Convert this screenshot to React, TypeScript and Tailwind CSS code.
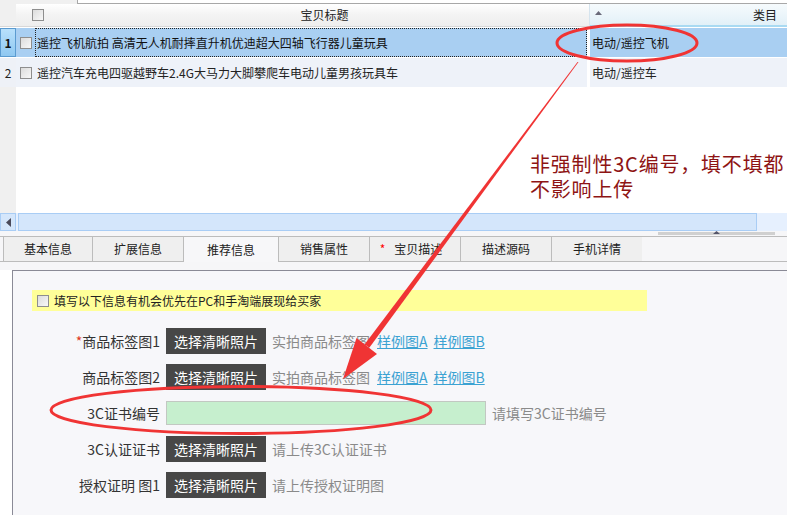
import React from "react";

function Check({ className = "" }: { className?: string }) {
  return (
    <span
      className={`inline-block w-[12px] h-[12px] border border-[#8e8e8e] bg-gradient-to-br from-[#dcdcdc] to-[#f8f8f8] ${className}`}
    />
  );
}

function Btn() {
  return (
    <div className="w-[100px] h-[26px] bg-[#474747] text-white text-[14px] flex items-center justify-center leading-none">
      选择清晰照片
    </div>
  );
}

export default function App() {
  const tabs = ["基本信息", "扩展信息", "推荐信息", "销售属性", "宝贝描述", "描述源码", "手机详情"];
  return (
    <div className="relative w-[787px] h-[515px] overflow-hidden bg-white font-['Noto_Sans_CJK_SC','Microsoft_YaHei',sans-serif] text-[#222]">
      {/* top strip */}
      <div className="flex h-[4px]">
        <div className="w-[77px] bg-[#f0f0f0]" />
        <div className="flex-1 bg-white border-l border-b border-[#a8a8a8]" />
      </div>
      {/* header */}
      <div className="flex h-[23px] text-[12px]">
        <div className="w-[16px] bg-[#f0f0f0] border-b border-[#d8d8d8]" />
        <div className="w-[573px] relative flex items-center border-b border-[#d8d8d8] bg-gradient-to-b from-[#ffffff] via-[#f3f3f3] to-[#eeeeee]">
          <Check className="ml-[16px]" />
          <div className="flex-1 text-center pl-[16px] leading-none">宝贝标题</div>
          <svg className="absolute left-[579px] top-[7px]" width="8" height="9" viewBox="0 0 8 9">
            <path d="M0 0 H8 V1.5 L5 3.5 V9 H3 V3.5 L0 1.5 Z" fill="#3b7fc4" />
          </svg>
        </div>
        <div className="w-px bg-[#d6e4ee]" />
        <div className="flex-1 relative flex items-center justify-end pr-[10px] bg-gradient-to-b from-[#f6fbfd] to-[#e2f0f8] border-b-2 border-[#a9daf2]">
          <svg className="absolute left-[5px] top-[7px]" width="7" height="4" viewBox="0 0 7 4">
            <path d="M0 4 L3.5 0 L7 4 Z" fill="#6a6a7a" />
          </svg>
          <span className="leading-none">类目</span>
        </div>
      </div>
      {/* row 1 */}
      <div className="flex h-[29px] mt-[1px] text-[12px]">
        <div className="w-[16px] bg-gradient-to-b from-[#b8e0fb] to-[#8fc8f1] border border-[#5b9bd0] flex items-center justify-center font-bold text-[12px] text-[#111]">
          1
        </div>
        <div className="w-[19px] bg-[#a9cff2] flex items-center justify-center">
          <Check />
        </div>
        <div className="w-[552px] bg-[#a9cff2] border border-dotted border-[#222] flex items-center pl-[1px] whitespace-nowrap overflow-hidden text-[#111]">
          遥控飞机航拍 高清无人机耐摔直升机优迪超大四轴飞行器儿童玩具
        </div>
        <div className="w-[3px] bg-white" />
        <div className="flex-1 bg-[#a9cff2] flex items-center pl-[2px] text-[#111]">电动/遥控飞机</div>
      </div>
      {/* row 2 */}
      <div className="flex h-[29px] mt-[1px] text-[12px]">
        <div className="w-[16px] bg-[#eef1f7] flex items-center justify-center text-[12px]">2</div>
        <div className="w-[19px] bg-[#eef2f9] flex items-center justify-center">
          <Check />
        </div>
        <div className="w-[552px] bg-[#eef2f9] flex items-center pl-[2px] whitespace-nowrap overflow-hidden">
          遥控汽车充电四驱越野车2.4G大马力大脚攀爬车电动儿童男孩玩具车
        </div>
        <div className="w-[3px] bg-white" />
        <div className="flex-1 bg-[#eef2f9] flex items-center pl-[2px]">电动/遥控车</div>
      </div>
      {/* empty area */}
      <div className="flex h-[126px]">
        <div className="w-[16px] bg-[#f0f0f0]" />
        <div className="flex-1 bg-white" />
      </div>
      {/* scrollbar */}
      <div className="flex h-[18px] bg-[#e6f0fe]">
        <div className="w-[16px] bg-[#d4e6fb] border border-[#a9cdf5] flex items-center justify-center">
          <svg width="5" height="9" viewBox="0 0 5 9">
            <path d="M5 0 L0 4.5 L5 9 Z" fill="#4a4a5a" />
          </svg>
        </div>
        <div className="w-[2px]" />
        <div className="w-[739px] bg-[#d4e6fb] border border-[#a9cdf5]" />
      </div>
      {/* splitter */}
      <div className="h-[5px] bg-[#f6f6f8] flex">
        <div className="ml-[658px] mt-[1px] w-[117px] h-[3px] bg-[#d0d0d0] flex justify-center">
          <svg width="7" height="3" viewBox="0 0 7 3" className="-mt-[1px]">
            <path d="M0 3 L3.5 0 L7 3 Z" fill="#55556a" />
          </svg>
        </div>
      </div>
      {/* tabs */}
      <div className="flex h-[26px] bg-[#f6f6f8] border-y border-[#bcbcbc] pl-[3px] text-[12px]">
        {tabs.map((t, i) => {
          const active = i === 2;
          const widths = ["w-[90px]", "w-[91px]", "w-[95px]", "w-[91px]", "w-[91px]", "w-[91px]", "w-[90px]"];
          return (
            <div
              key={t}
              className={`${widths[i]} flex items-center justify-center ${
                active ? "bg-[#f7f7f9] h-[25px] relative z-10" : "bg-[#efefef] h-[24px]"
              } ${i === 0 ? "border-l" : ""} ${i < 6 ? "border-r" : ""} border-[#bcbcbc] text-[#222]`}
            >
              {i === 4 ? (
                <>
                  <span className="text-[#ff0000] mr-[9px] -ml-[8px]">*</span>
                  {t}
                </>
              ) : (
                t
              )}
            </div>
          );
        })}
      </div>
      <div className="h-[8px] bg-[#f6f6f8]" />
      {/* content panel */}
      <div className="ml-[12px] h-[245px] border-t border-l border-[#8a8a96] bg-[#f7f7fa]">
        <div className="ml-[19px] mt-[19px] w-[615px] h-[21px] bg-[#ffff99] flex items-center pl-[5px] text-[12px] text-[#222]">
          <Check />
          <span className="ml-[5px] leading-none">填写以下信息有机会优先在PC和手淘端展现给买家</span>
        </div>
        <div className="mt-[17px] flex flex-col gap-[10px] text-[14px]">
          <div className="flex items-center h-[26px]">
            <div className="w-[147px] text-right text-[#333]">
              <span className="text-[#e03a1e]">*</span>商品标签图1
            </div>
            <div className="ml-[6px]">
              <Btn />
            </div>
            <span className="ml-[6px] text-[#8a8a8a]">实拍商品标签图</span>
            <span className="ml-[7px] text-[#3ba2d2] underline">样例图A</span>
            <span className="ml-[6px] text-[#3ba2d2] underline">样例图B</span>
          </div>
          <div className="flex items-center h-[26px]">
            <div className="w-[147px] text-right text-[#333]">商品标签图2</div>
            <div className="ml-[6px]">
              <Btn />
            </div>
            <span className="ml-[6px] text-[#8a8a8a]">实拍商品标签图</span>
            <span className="ml-[7px] text-[#3ba2d2] underline">样例图A</span>
            <span className="ml-[6px] text-[#3ba2d2] underline">样例图B</span>
          </div>
          <div className="flex items-center h-[26px]">
            <div className="w-[147px] text-right text-[#333]">3C证书编号</div>
            <div className="ml-[6px] w-[320px] h-[24px] bg-[#c6efce] border border-[#c2c8c2]" />
            <span className="ml-[6px] text-[#8a8a8a]">请填写3C证书编号</span>
          </div>
          <div className="flex items-center h-[26px]">
            <div className="w-[147px] text-right text-[#333]">3C认证证书</div>
            <div className="ml-[6px]">
              <Btn />
            </div>
            <span className="ml-[6px] text-[#8a8a8a]">请上传3C认证证书</span>
          </div>
          <div className="flex items-center h-[26px]">
            <div className="w-[147px] text-right text-[#333]">授权证明 图1</div>
            <div className="ml-[6px]">
              <Btn />
            </div>
            <span className="ml-[6px] text-[#8a8a8a]">请上传授权证明图</span>
          </div>
        </div>
      </div>

      {/* annotation overlay */}
      <svg className="absolute left-0 top-0 pointer-events-none" width="787" height="515" viewBox="0 0 787 515">
        <ellipse cx="627" cy="43" rx="70" ry="18" fill="none" stroke="#f03434" strokeWidth="3" />
        <ellipse cx="241" cy="410" rx="190" ry="23.5" fill="none" stroke="#f03434" strokeWidth="3" />
        <polygon points="577.5,62 578.5,62 369.5,347.5 364.5,344.5" fill="#f03434" />
        <polygon points="343,379 377,354 356.5,338" fill="#f03434" />
      </svg>
      <div className="absolute left-[530px] top-[151px] flex flex-col text-[20px] tracking-[0.8px] text-[#8e1414] whitespace-nowrap">
        <div className="h-[25px] leading-[25px]">非强制性3C编号，填不填都</div>
        <div className="h-[25px] leading-[25px]">不影响上传</div>
      </div>
    </div>
  );
}
